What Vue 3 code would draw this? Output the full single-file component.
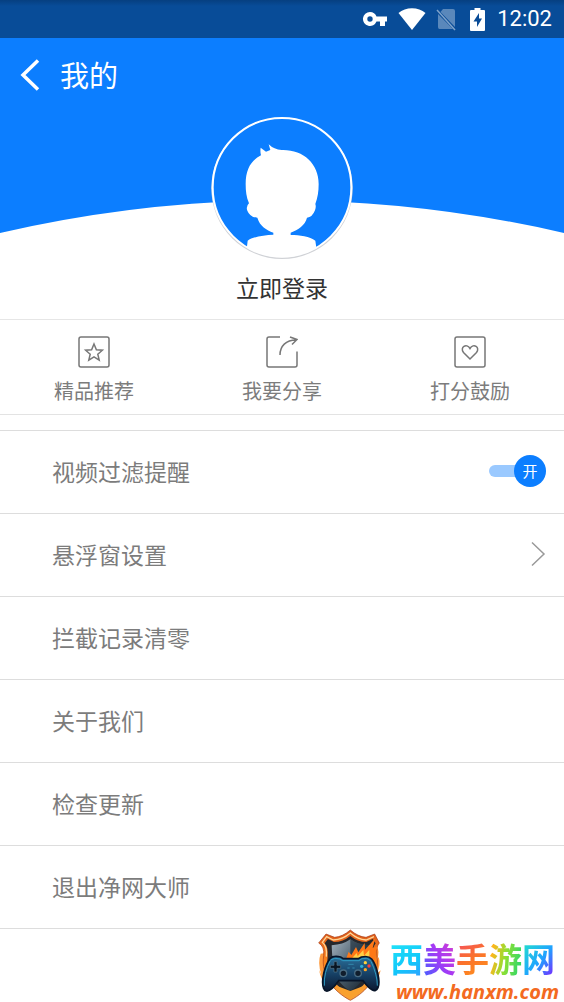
<script setup>
import {ref} from 'vue'

const filterReminder = ref(true)

const actions = [
    {name: 'star', label: '精品推荐'},
    {name: 'share', label: '我要分享'},
    {name: 'heart', label: '打分鼓励'},
]

const entries = [
    {label: '悬浮窗设置', arrow: true},
    {label: '拦截记录清零'},
    {label: '关于我们'},
    {label: '检查更新'},
    {label: '退出净网大师'},
]
</script>

<template>
    <div class="page">
        <div class="status-bar">
            <svg class="key" width="26" height="16" viewBox="0 0 26 16">
                <path fill="#fff" fill-rule="evenodd" d="M8 1a7 7 0 0 1 6.500 4.500H25v5h-2V15h-5v-4.500h-3.500A7 7 0 1 1 8 1zM8 5.300a2.700 2.700 0 1 0 0 5.400a2.700 2.700 0 0 0 0-5.400z"/>
            </svg>
            <svg class="wifi" width="28" height="22" viewBox="0 0 28 22">
                <path fill="#fff" d="M14 22L0.500 5C4 2 9 .3 14 .3S24 2 27.500 5z"/>
            </svg>
            <svg class="sim" width="20" height="23" viewBox="0 0 20 23">
                <path fill="#5a88bb" d="M7 1h10q2 0 2 2v16L4.500 4zM2 6l15 15H3.500Q2 21 2 19z"/>
                <path stroke="#7fa3ca" stroke-width="1.500" d="M1 2l18 20"/>
            </svg>
            <svg class="battery" width="15" height="23" viewBox="0 0 15 23">
                <path fill="#fff" d="M4.500 0h6v2H14q1 0 1 1v19q0 1-1 1H1q-1 0-1-1V3q0-1 1-1h3.500z"/>
                <path fill="#084b96" d="M9 5L3.500 13.500H7V19l5-8.500H9z"/>
            </svg>
            <span class="clock">12:02</span>
        </div>

        <header class="hero">
            <svg class="curve" viewBox="0 0 564 195" preserveAspectRatio="none">
                <path fill="#0c7eff" d="M0 0H564V195Q282 130 0 195z"/>
            </svg>
            <div class="title-bar">
                <button class="back" aria-label="返回">
                    <svg width="20" height="32" viewBox="0 0 20 32">
                        <path fill="none" stroke="#fff" stroke-width="3.500" d="M18 1.500L3 16l15 14.500"/>
                    </svg>
                </button>
                <h1>我的</h1>
            </div>
            <button class="login">
                <svg class="avatar" width="142" height="142" viewBox="34 35 426 426">
                    <defs>
                        <clipPath id="face"><circle cx="247" cy="247" r="209"/></clipPath>
                    </defs>
                    <circle cx="247" cy="249" r="212" fill="#d0d2d6"/>
                    <circle cx="247" cy="246" r="209" fill="#0c7eff"/>
                    <path clip-path="url(#face)" fill="#fff" d="M183 127L199 139L212 134L207 117Q223 133 246 134C310 132 357 174 357 236C357 260 354 277 347 296Q350 304 346 315Q338 336 322 337C316 360 296 373 273 382V389C300 389 331 394 347 406L352 440V470H140V440L144 406C158 395 192 389 221 388V382C200 374 181 363 173 337Q151 336 143 316Q138 303 148 294C140 275 138 258 138 236C138 193 153 166 184 150Q181 139 183 127z"/>
                    <circle cx="247" cy="246" r="208" fill="none" stroke="#fff" stroke-width="6"/>
                </svg>
                <span>立即登录</span>
            </button>
        </header>

        <nav class="actions">
            <button v-for="action in actions" :key="action.name">
                <svg width="32" height="32" viewBox="0 0 32 32" fill="none" stroke="#777" stroke-width="1.500">
                    <template v-if="action.name === 'share'">
                        <path d="M14 1H3Q1 1 1 3v26q0 2 2 2h26q2 0 2-2V15.500"/>
                        <path d="M14 19C14 10 20 4 30 4M24 1l7 2.500l-5 5"/>
                    </template>
                    <template v-else>
                        <rect x="1" y="1" width="30" height="30" rx="2"/>
                        <path v-if="action.name === 'star'" d="M16 8l2.400 5.700l6 .5l-4.600 4l1.400 5.900L16 20.900l-5.200 3.200l1.400-5.900l-4.600-4l6-.5z"/>
                        <path v-else d="M16 23L9.500 16.500C5.500 11.500 12.500 6.500 16 12.500C19.500 6.500 26.500 11.500 22.500 16.500z"/>
                    </template>
                </svg>
                <span>{{ action.label }}</span>
            </button>
        </nav>

        <main class="menu">
            <label class="row">
                <span>视频过滤提醒</span>
                <span class="switch">
                    <input v-model="filterReminder" type="checkbox">
                    <span class="knob">{{ filterReminder ? '开' : '关' }}</span>
                </span>
            </label>
            <button v-for="entry in entries" :key="entry.label" class="row">
                <span>{{ entry.label }}</span>
                <svg v-if="entry.arrow" width="16" height="26" viewBox="0 0 16 26">
                    <path fill="none" stroke="#999" stroke-width="1.500" d="M2 1.500L14 13L2 24.500"/>
                </svg>
            </button>
        </main>

        <footer class="brand">
            <svg width="66" height="72" viewBox="0 0 198 216">
                <defs>
                    <linearGradient id="flame" x1="0" y1="0" x2="0" y2="1">
                        <stop offset="0" stop-color="#d9571a"/>
                        <stop offset=".5" stop-color="#ff8a1e"/>
                        <stop offset="1" stop-color="#f7a43a"/>
                    </linearGradient>
                    <linearGradient id="steel" x1="0" y1="0" x2="1" y2="1">
                        <stop offset="0" stop-color="#a5b3bf"/>
                        <stop offset=".5" stop-color="#4a5d6b"/>
                        <stop offset="1" stop-color="#101c28"/>
                    </linearGradient>
                    <linearGradient id="pad" x1="0" y1="0" x2="0" y2="1">
                        <stop offset="0" stop-color="#2a6f9a"/>
                        <stop offset=".55" stop-color="#153d61"/>
                        <stop offset="1" stop-color="#0c1830"/>
                    </linearGradient>
                </defs>
                <path fill="#ff9a3c" d="M14 74Q4 100 16 138L9 122Q14 150 30 168H172Q186 158 194 124L181 136Q196 108 188 84L182 94Q194 66 180 50z"/>
                <path fill="url(#flame)" stroke="#a63a17" stroke-width="2" d="M103 3Q126 23 150 25L176 15L190 42Q180 52 183 80C192 140 153 188 103 214C53 188 14 140 23 80Q26 52 8 42L30 15L56 25Q80 23 103 3z"/>
                <path fill="none" stroke="#ffd596" stroke-width="4" d="M174 23L150 33Q126 32 103 12Q80 32 52 33L32 23L19 40Q34 52 31 83"/>
                <path fill="#26282d" d="M103 21Q125 39 151 39L170 30L179 43Q169 55 171 83C177 132 147 174 103 198C59 174 29 132 35 83Q37 55 26 43L36 30L54 39Q81 39 103 21z"/>
                <path fill="url(#steel)" d="M103 31Q125 47 159 49C156 123 149 160 103 186C57 160 50 123 47 49Q81 47 103 31z"/>
                <path fill="#11202d" opacity=".55" d="M103 31Q125 47 159 49L157 94L103 105z"/>
                <path fill="#f9a12e" d="M62 170Q82 178 103 186Q124 178 144 170L128 192L103 210L78 192z"/>
                <path fill="#ff7816" d="M90 90L98 68L106 78L120 54L127 70L146 42L147 62L178 28L170 56L186 52Q170 81 178 108L130 100z"/>
                <path fill="#ffcf45" d="M106 90L122 72L125 82L142 63L144 80L160 62L160 96z"/>
                <path fill="url(#pad)" stroke="#071428" stroke-width="5" d="M42 89Q51 79 74 84L82 89H127L136 84Q157 79 167 90C182 108 194 156 186 176C178 195 161 181 141 155H68C49 181 31 197 23 178C14 155 27 107 42 89z"/>
                <path fill="none" stroke="#2f9cc4" stroke-width="3" d="M44 93Q55 84 72 90L80 95H129L138 89Q154 84 164 95M25 170Q23 130 43 95M184 170Q184 137 165 97"/>
                <path fill="#091522" stroke="#54758a" stroke-width="2" d="M54 98h9v11h11v9H63v11h-9v-11H43v-9h11z"/>
                <g fill="#101d2c" stroke="#496c83" stroke-width="4">
                    <circle cx="82" cy="133" r="10"/>
                    <circle cx="126" cy="133" r="10"/>
                </g>
                <circle cx="148" cy="101" r="5" fill="#ffd13b"/>
                <circle cx="137" cy="112" r="5" fill="#2caed9"/>
                <circle cx="159" cy="111" r="5" fill="#ff3c38"/>
                <circle cx="148" cy="122" r="5" fill="#ffa725"/>
                <path stroke="#3387aa" stroke-width="3" d="M97 106h16M94 117h7M109 117h7"/>
            </svg>
            <div class="brand-text">
                <div class="brand-name">
                    <span class="cyan">西</span><span class="violet">美</span><span class="orange">手</span><span class="lime">游</span><span class="aqua">网</span>
                </div>
                <a href="#">www.hanxm.com</a>
            </div>
        </footer>
    </div>
</template>

<style>
body {
    margin: 0;
    background: #fff;
}
</style>

<style scoped>
.page {
    font-family: "Noto Sans CJK SC", sans-serif;
    color: #7c7c7c;
}

button {
    margin: 0;
    padding: 0;
    border: 0;
    background: none;
    font: inherit;
    color: inherit;
    cursor: pointer;
}

svg {
    display: block;
    flex-shrink: 0;
}

.status-bar {
    display: flex;
    align-items: center;
    justify-content: flex-end;
    height: 38px;
    padding-right: 12px;
    background: linear-gradient(#063f80, #084c98 6px);
}

.wifi {
    margin-left: 10px;
}

.sim {
    margin-left: 10px;
}

.battery {
    margin-left: 14px;
}

.clock {
    margin-left: 12px;
    font: 400 22px/38px Roboto, sans-serif;
    color: #fff;
}

.hero {
    position: relative;
    display: flex;
    flex-direction: column;
    padding-bottom: 16px;
    border-bottom: 1px solid #e6e6e6;
}

.curve {
    position: absolute;
    top: 0;
    left: 0;
    width: 100%;
    height: 195px;
}

.title-bar {
    position: relative;
    display: flex;
    align-items: center;
    gap: 20px;
    height: 74px;
    padding-left: 20px;
}

h1 {
    margin: 0;
    padding-bottom: 2px;
    font-size: 29px;
    line-height: 40px;
    font-weight: 400;
    color: #fff;
}

.login {
    position: relative;
    display: flex;
    flex-direction: column;
    align-items: center;
    align-self: center;
    gap: 12px;
    margin-top: 5px;
    font-size: 23px;
    line-height: 32px;
    color: #333;
}

.actions {
    display: grid;
    grid-template-columns: repeat(3, 1fr);
    border-bottom: 1px solid #e3e3e3;
}

.actions button {
    display: flex;
    flex-direction: column;
    align-items: center;
    gap: 8px;
    padding: 16px 0 8px;
    font-size: 20px;
    line-height: 30px;
}

.menu {
    margin-top: 15px;
    border-top: 1px solid #ddd;
}

.row {
    display: flex;
    align-items: center;
    justify-content: space-between;
    box-sizing: border-box;
    width: 100%;
    height: 83px;
    padding: 0 18px 2px 52px;
    border-bottom: 1px solid #ddd;
    font-size: 23px;
    line-height: 36px;
    cursor: pointer;
}

.switch {
    position: relative;
    display: flex;
    align-items: center;
    width: 57px;
    height: 32px;
}

.switch input {
    appearance: none;
    width: 50px;
    height: 12px;
    margin: 0;
    border-radius: 6px;
    background: #ccc;
}

.switch input:checked {
    background: #9ac9ff;
}

.knob {
    position: absolute;
    top: 0;
    left: 0;
    width: 32px;
    border-radius: 50%;
    background: #aaa;
    font-size: 15px;
    line-height: 32px;
    text-align: center;
    color: #fff;
}

.switch input:checked + .knob {
    right: 0;
    left: auto;
    background: #0c7eff;
}

.brand {
    display: flex;
    justify-content: flex-end;
    gap: 8px;
    padding-right: 5px;
}

.brand-text {
    display: flex;
    flex-direction: column;
    padding-top: 5px;
}

.brand-name {
    display: flex;
    font-size: 33px;
    line-height: 48px;
    font-weight: 700;
}

.brand-name span {
    background-clip: text;
    color: transparent;
}

.brand-name .cyan {
    background-image: linear-gradient(150deg, #20dff8 20%, #10c8fa 60%, #2fa0ff 90%);
}

.brand-name .violet {
    background-image: linear-gradient(60deg, #4f5cff 10%, #a33af5 50%, #e040c8);
}

.brand-name .orange {
    background-image: linear-gradient(150deg, #f34c63 10%, #fb732b 50%, #ff9d17);
}

.brand-name .lime {
    background-image: linear-gradient(100deg, #ffb51c 15%, #8ee032 50%, #2ed76a 90%);
}

.brand-name .aqua {
    background-image: linear-gradient(130deg, #22dcd0 15%, #1fa4ff 55%, #6a3cff 85%);
}

.brand a {
    padding-left: 6px;
    font: italic 700 20px/20px "Open Sans", sans-serif;
    color: #f36a21;
    text-decoration: none;
}
</style>
